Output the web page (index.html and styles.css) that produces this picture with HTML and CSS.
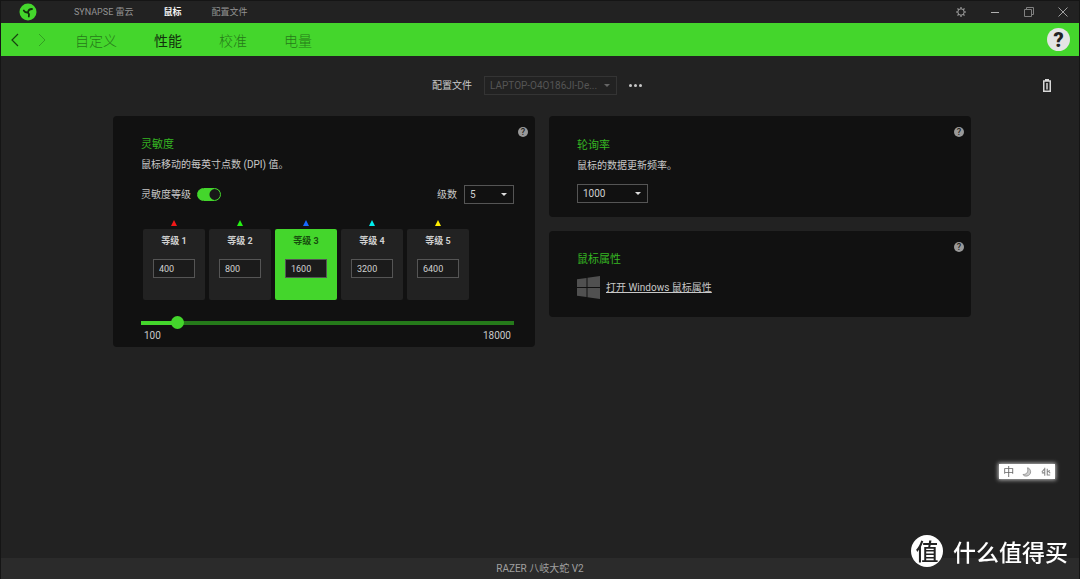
FILE: index.html
```html
<!DOCTYPE html>
<html lang="zh-CN">
<head>
<meta charset="utf-8">
<meta name="viewport" content="width=device-width, initial-scale=1">
<title>SYNAPSE 雷云</title>
<link rel="stylesheet" href="styles.css">
</head>
<body>
<div class="app">
  <header class="titlebar">
    <svg class="logo" viewBox="0 0 18 18" aria-hidden="true">
      <circle cx="9" cy="9" r="8.500" fill="#44d62c"/>
      <path d="M4.800 7.500C5.500 9.200 7 9.600 9 9.500C9.200 7.500 10.500 6 13 6M9 9.500C10 10.500 10.300 12 9.800 13.500" fill="none" stroke="#12300c" stroke-width="1.800" stroke-linecap="round"/>
    </svg>
    <nav class="apptabs">
      <a href="#synapse">SYNAPSE 雷云</a>
      <a href="#mouse" class="active">鼠标</a>
      <a href="#profiles">配置文件</a>
    </nav>
    <div class="winbuttons">
      <button aria-label="设置"><svg viewBox="0 0 12 12"><circle cx="6" cy="6" r="3.200" fill="none" stroke="#a0a0a0"/><path d="M6 1v1.800M6 9.200V11M1 6h1.800M9.200 6H11M2.500 2.500l1.200 1.200M8.300 8.300l1.200 1.200M9.500 2.500L8.300 3.700M3.700 8.300L2.500 9.500" stroke="#a0a0a0" stroke-width="1.200"/></svg></button>
      <button aria-label="最小化"><svg viewBox="0 0 12 12"><path d="M2 6.500h8" stroke="#b0b0b0"/></svg></button>
      <button aria-label="还原"><svg viewBox="0 0 12 12"><path d="M1.500 3.500h7v7h-7zM3.500 3.500v-2h7v7h-2" fill="none" stroke="#808080"/></svg></button>
      <button aria-label="关闭"><svg viewBox="0 0 12 12"><path d="M1.500 1.500l9 9M10.500 1.500l-9 9" stroke="#a0a0a0"/></svg></button>
    </div>
  </header>

  <div class="navbar">
    <div class="arrows">
      <button aria-label="后退"><svg viewBox="0 0 10 14"><path d="M8 1L2 7l6 6" fill="none" stroke="#17430f" stroke-width="1.200"/></svg></button>
      <button aria-label="前进"><svg viewBox="0 0 10 14"><path d="M2 1l6 6-6 6" fill="none" stroke="#339f22"/></svg></button>
    </div>
    <nav class="pages">
      <a href="#custom">自定义</a>
      <a href="#performance" class="active">性能</a>
      <a href="#calibration">校准</a>
      <a href="#power">电量</a>
    </nav>
    <button class="help" aria-label="帮助">?</button>
  </div>

  <main class="content">
    <div class="profilebar">
      <div class="profile">
        <label for="profile">配置文件</label>
        <span class="select wide"><select id="profile" disabled><option>LAPTOP-O4O186JI-De...</option></select></span>
        <button class="more" aria-label="更多"><i></i><i></i><i></i></button>
      </div>
      <svg class="battery" viewBox="0 0 8 13" role="img" aria-label="电池"><path d="M2 0h4v2H2z" fill="#d8d8d8"/><rect x=".75" y="2" width="6.500" height="10.250" fill="none" stroke="#d8d8d8" stroke-width="1.500"/><path d="M3 4h2v6.500H3z" fill="#a8a8a8"/></svg>
    </div>

    <div class="columns">
      <section class="card">
        <button class="tip" aria-label="灵敏度帮助">?</button>
        <h2>灵敏度</h2>
        <p>鼠标移动的每英寸点数 (DPI) 值。</p>
        <div class="controls">
          <label for="stages-on">灵敏度等级</label>
          <input id="stages-on" class="toggle" type="checkbox" checked>
          <label for="count" class="count">级数</label>
          <span class="select short"><select id="count"><option>5</option></select></span>
        </div>
        <div class="stages">
          <div class="stage red"><div class="box"><label for="s1">等级 1</label><input id="s1" type="text" value="400"></div></div>
          <div class="stage green"><div class="box"><label for="s2">等级 2</label><input id="s2" type="text" value="800"></div></div>
          <div class="stage blue"><div class="box current"><label for="s3">等级 3</label><input id="s3" type="text" value="1600"></div></div>
          <div class="stage cyan"><div class="box"><label for="s4">等级 4</label><input id="s4" type="text" value="3200"></div></div>
          <div class="stage yellow"><div class="box"><label for="s5">等级 5</label><input id="s5" type="text" value="6400"></div></div>
        </div>
        <input class="slider" type="range" min="100" max="18000" step="100" value="1600" aria-label="DPI">
        <div class="scale"><span>100</span><span>18000</span></div>
      </section>

      <div class="side">
        <section class="card polling">
          <button class="tip" aria-label="轮询率帮助">?</button>
          <h2><label for="rate">轮询率</label></h2>
          <p>鼠标的数据更新频率。</p>
          <span class="select medium"><select id="rate"><option>1000</option></select></span>
        </section>
        <section class="card properties">
          <button class="tip" aria-label="鼠标属性帮助">?</button>
          <h2>鼠标属性</h2>
          <div class="winlink">
            <svg viewBox="0 0 23 23" aria-hidden="true"><path d="M0 3.300L9.500 2v9H0zM10.500 1.800L23 0v11H10.500zM0 12h9.500v9L0 19.700zM10.500 12H23v11l-12.500-1.800z" fill="#505050"/></svg>
            <a href="#properties">打开 Windows 鼠标属性</a>
          </div>
        </section>
      </div>
    </div>
  </main>

  <footer class="footer">RAZER 八岐大蛇 V2</footer>
</div>

<div class="ime">
  <span>中</span>
  <svg viewBox="0 0 10 10" aria-hidden="true"><path d="M5.500.8C9.500 1.500 10 8 5 9 3 9.400 1.500 8.600 1 7.500 5.500 7.500 6.500 4 5.500.8z" fill="#ccc" stroke="#888" stroke-width=".8"/></svg>
  <svg viewBox="0 0 12 10" aria-hidden="true"><path d="M4.500 0v9.500M1 5l3-3.500M1 6h3M7.500 1v7.500H11M7.500 5l3-2M9.500 4.500l1.500 2" fill="none" stroke="#888" stroke-width="1.300"/></svg>
</div>
<div class="watermark"><span class="seal">值</span><span>什么值得买</span></div>
</body>
</html>
```

FILE: styles.css
```css
* { box-sizing: border-box; }

body {
  margin: 0;
  background: #222;
  color: #c8c8c8;
  font: 10px/16px Roboto, "Noto Sans CJK SC", sans-serif;
}

button {
  padding: 0;
  border: 0;
  background: none;
  color: inherit;
  font: inherit;
}

a { color: inherit; text-decoration: none; }

.app {
  display: flex;
  flex-direction: column;
  min-height: 100vh;
  border: 1px solid #151515;
  border-bottom: 0;
}

.titlebar {
  display: flex;
  align-items: center;
  height: 22px;
  padding: 0 10px 0 18px;
}

.logo { width: 18px; height: 18px; }

.apptabs {
  display: flex;
  gap: 30px;
  margin-left: 37px;
  color: #929292;
  font-size: 9px;
}

.apptabs .active { color: #f2f2f2; font-weight: 700; }

.winbuttons { display: flex; gap: 22px; margin-left: auto; }
.winbuttons button { width: 12px; height: 12px; }
.winbuttons svg, .arrows svg { display: block; width: 100%; height: 100%; }

.navbar {
  display: flex;
  align-items: center;
  height: 33px;
  padding: 0 9px;
  background: #44d62c;
}

.arrows { display: flex; gap: 17px; }
.arrows button { width: 10px; height: 14px; }

.pages {
  display: flex;
  gap: 37px;
  margin-left: 28px;
  color: #267919;
  font-family: "Noto Sans CJK SC", sans-serif;
  font-size: 14px;
  font-weight: 300;
  line-height: 24px;
}

.pages .active { color: #12300c; font-weight: 400; }

.help {
  width: 23px;
  height: 23px;
  margin-left: auto;
  border-radius: 50%;
  background: #e4e4e4;
  color: #222;
  font: 900 20px/24px Roboto, sans-serif;
}

.content { flex: 1; padding: 20px 0 16px 4px; }

.profilebar {
  display: grid;
  grid-template-columns: 1fr auto 1fr;
  align-items: center;
  padding-right: 28px;
}

.profile { display: flex; align-items: center; grid-column: 2; gap: 12px; margin-left: 18px; }
.battery { width: 8px; height: 13px; justify-self: end; }
.more { display: flex; gap: 2px; }
.more i { width: 3px; height: 3px; border-radius: 50%; background: #c8c8c8; }

.select { position: relative; display: block; }

.select::after {
  content: "";
  position: absolute;
  top: 8px;
  right: 7px;
  border: 3px solid transparent;
  border-top-color: #ddd;
  pointer-events: none;
}

.select select {
  display: block;
  appearance: none;
  width: 100%;
  height: 19px;
  padding: 0 5px;
  border: 1px solid #555;
  border-radius: 0;
  background: #111;
  color: #d0d0d0;
  font: 10px/16px Roboto, sans-serif;
}

.wide { width: 133px; }
.wide select { border-color: #343434; background: #222; color: #555; opacity: 1; }
.wide::after { border-top-color: #666; }
.short { width: 50px; }
.medium { width: 71px; }

.columns {
  display: grid;
  grid-template-columns: 1fr 1fr;
  align-items: start;
  gap: 14px;
  max-width: 858px;
  margin: 21px auto 0;
}

.side { display: grid; gap: 14px; }

.card {
  position: relative;
  padding: 20px 21px 4px 28px;
  border-radius: 4px;
  background: #111;
}

.card h2 {
  margin: 0;
  color: #35b522;
  font-size: 11px;
  font-weight: 400;
  line-height: 18px;
}

.card p { margin: 3px 0 0; }

.tip {
  position: absolute;
  top: 11px;
  right: 7px;
  width: 10px;
  height: 10px;
  border-radius: 50%;
  background: #999;
  color: #222;
  font: 500 9px/10px Roboto, sans-serif;
}

.controls { display: flex; align-items: center; margin-top: 12px; }

.toggle {
  appearance: none;
  width: 24px;
  height: 13px;
  margin: 0 0 0 6px;
  border: 1px solid #44d62c;
  border-radius: 7px;
  background: radial-gradient(circle at 17px 50%, #181818 5px, #44d62c 6px);
}

.count { margin: 0 7px 0 auto; }

.stages { display: flex; gap: 4px; margin: 16px 0 0 2px; }
.stage { width: 62px; }

.stage::before {
  content: "";
  display: block;
  width: 0;
  margin: 0 auto 3px;
  border: solid transparent;
  border-width: 0 3px 6px;
  border-bottom-color: var(--mark);
}

.red { --mark: #f21717; }
.green { --mark: #25ef14; }
.blue { --mark: #1668ff; }
.cyan { --mark: #00eeee; }
.yellow { --mark: #ffee00; }

.box {
  height: 71px;
  padding: 4px 10px;
  border-radius: 2px;
  background: #222;
  text-align: center;
}

.box label {
  display: block;
  color: #d0d0d0;
  font-size: 9px;
  font-weight: 700;
}

.box input {
  display: block;
  width: 100%;
  height: 19px;
  margin-top: 10px;
  padding: 0 5px;
  border: 1px solid #555;
  background: #1b1b1b;
  color: #d0d0d0;
  font: 9px/16px Roboto, sans-serif;
}

.current { background: #44d62c; }
.current label { color: #174d0e; }

.slider {
  appearance: none;
  display: block;
  width: 100%;
  height: 13px;
  margin: 16px 0 0;
  background: linear-gradient(90deg, #44d62c 10%, #257a1a 10%) center / 100% 4px no-repeat;
}

.slider::-webkit-slider-thumb {
  appearance: none;
  width: 13px;
  height: 13px;
  border-radius: 50%;
  background: #44d62c;
}

.scale {
  display: flex;
  justify-content: space-between;
  padding: 0 3px;
  line-height: 14px;
}

.polling { padding-top: 21px; padding-bottom: 14px; }
.polling .select { margin-top: 10px; }
.properties { padding-bottom: 18px; }
.winlink { display: flex; align-items: center; gap: 6px; margin-top: 7px; }
.winlink svg { width: 23px; height: 23px; }
.winlink a { text-decoration: underline; text-underline-offset: 1px; }

.footer {
  background: #2b2b2b;
  color: #a0a0a0;
  line-height: 21px;
  text-align: center;
}

.ime {
  position: fixed;
  right: 25px;
  bottom: 100px;
  display: flex;
  align-items: center;
  justify-content: space-around;
  width: 56px;
  height: 15px;
  background: #fff;
  box-shadow: 0 0 4px 1px #bbb;
  color: #666;
  font: 11px/15px "Noto Sans CJK SC", sans-serif;
}

.ime svg { width: 10px; height: 10px; }

.watermark {
  position: fixed;
  right: 12px;
  bottom: 12px;
  display: flex;
  align-items: center;
  gap: 10px;
  color: #fff;
  font: 500 23px/31px "Noto Sans CJK SC", sans-serif;
}

.seal {
  width: 32px;
  height: 32px;
  border-radius: 50%;
  background: #fff;
  color: #222;
  text-align: center;
}
```
